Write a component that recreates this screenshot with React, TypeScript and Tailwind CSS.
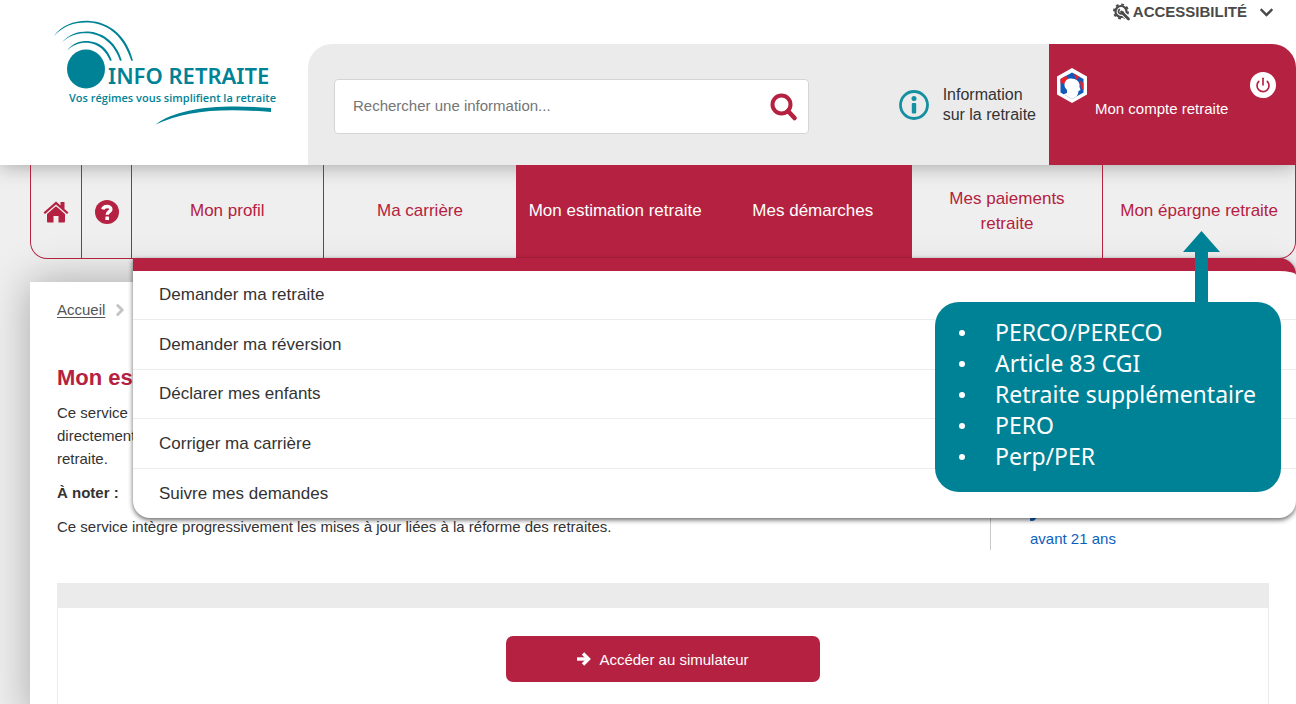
import * as React from 'react';
import { ChevronRight, Power } from 'lucide-react';
import { FaChevronDown, FaPen } from 'react-icons/fa';

// --- DATA ---
interface NavItem {
  label: string;
  active?: boolean;
}

const navItems: NavItem[] = [
  { label: 'Mon profil' },
  { label: 'Ma carrière' },
  { label: 'Mon estimation retraite', active: true },
  { label: 'Mes démarches', active: true },
  { label: 'Mes paiements retraite' },
  { label: 'Mon épargne retraite' },
];

const menuItems = [
  'Demander ma retraite',
  'Demander ma réversion',
  'Déclarer mes enfants',
  'Corriger ma carrière',
  'Suivre mes demandes',
];

const savingsPlans = ['PERCO/PERECO', 'Article 83 CGI', 'Retraite supplémentaire', 'PERO', 'Perp/PER'];

// --- ICONS ---
const Logo = () => (
  <svg width="260" height="130" viewBox="0 0 260 130" fill="#008296" role="img" aria-label="Info Retraite">
    <ellipse cx="46" cy="59" rx="19" ry="19.5" />
    <path d="M13.5 26.500C22 15 34 10.500 48 10.800C71 12 87 27 93 50.500L91.300 50.800C84 28 70 13.500 48 12.500C34 12 23 16 13.500 26.500Z" />
    <path d="M21.500 33C29 24 38 21.300 48 21.500C65 22.500 77 34 81.800 50.500L80 50.800C75 36 64 24.500 48 23.300C38 22.800 29 25 21.500 33Z" />
    <path d="M27 40.500C33 33 40 30.800 48 31C60 32 68 39 71.800 50.500L70 50.800C66 41 59 34 48 32.700C40 32.200 33 34.500 27 40.500Z" />
    <path d="M115.500 114.500C138 98 178 94 231 98L231 102C180 97.500 144 101 115.500 114.500Z" />
    <text x="68" y="74" fontSize="22" fontWeight="600" fontFamily="'Noto Sans', sans-serif">
      INFO RETRAITE
    </text>
    <text x="29" y="92" fontSize="11" fontWeight="600" fontFamily="'Open Sans', sans-serif">
      Vos régimes vous simplifient la retraite
    </text>
  </svg>
);

const SearchIcon = () => (
  <svg width="27" height="28" viewBox="0 0 27 28" fill="none" stroke="#b52140">
    <circle cx="11.500" cy="11.500" r="9" strokeWidth="4" />
    <path d="M18 18L24.500 25" strokeWidth="4.500" strokeLinecap="round" />
  </svg>
);

const InfoIcon = () => (
  <svg width="30" height="32" viewBox="0 0 30 32" fill="#1490a0">
    <circle cx="15" cy="16" r="13.500" fill="none" stroke="#1490a0" strokeWidth="2.800" />
    <circle cx="15" cy="9.500" r="2.500" />
    <rect x="12.800" y="14" width="4.400" height="10.500" rx="1" />
  </svg>
);

const ToolsIcon = () => (
  <svg width="18" height="18" viewBox="0 0 18 18" fill="none" stroke="#4a4a4a">
    <circle cx="8" cy="8.500" r="5.500" strokeWidth="2.200" />
    <circle cx="8" cy="8.500" r="7.100" strokeWidth="1.800" strokeDasharray="2.800 2.780" />
    <path d="M9 9.500L17 17" stroke="#fff" strokeWidth="5" />
    <path d="M8.500 9L15.500 16" strokeWidth="2.800" strokeLinecap="round" />
    <path d="M7 6.200A2.400 2.400 0 1 0 10.300 8.500" strokeWidth="1.700" />
  </svg>
);

const FranceConnectIcon = () => (
  <svg width="30" height="35" viewBox="0 0 30 35">
    <path d="M15 0L30 8.500V26.500L15 35L0 26.500V8.500Z" fill="#fff" />
    <path d="M15 4.500L26.500 11V24.500L15 31L3.500 24.500V11Z" fill="#1259b8" />
    <path d="M3.500 11L9 7.800L12 12L7 16L3.500 15ZM17 5.500L22.500 8.800L19 12ZM23 13L26.500 15V22L24 20Z" fill="#e8202e" />
    <path d="M7.500 16C8 11 13 9.500 17.500 11C22 12.500 23 16 22.500 19L23.500 22L21.500 23L21 26L19.500 28.500L15 31L6.500 26.200L10 25L10 22C8 20 7.300 18.500 7.500 16Z" fill="#fff" />
  </svg>
);

const HomeIcon = () => (
  <svg width="26" height="22" viewBox="0 0 26 22" fill="#b52140">
    <path d="M13 0.500L17.500 4.500V1H21.500V8L25.500 11.500L24 13L13 3.500L2 13L0.500 11.500Z" />
    <path d="M13 5.300L22 13V20.500Q22 21.500 21 21.500H15.500V15H10.500V21.500H5Q4 21.500 4 20.500V13Z" />
  </svg>
);

const HelpIcon = () => (
  <svg width="24" height="24" viewBox="0 0 24 24" fill="none">
    <circle cx="12" cy="12" r="12" fill="#b52140" />
    <path d="M7.800 9.300C8.500 5.800 15.800 5.300 15.900 9.300C15.900 11.800 12.200 11.600 12.200 14.800" stroke="#fff" strokeWidth="3.400" />
    <rect x="10.400" y="16.400" width="3.600" height="3.600" rx="0.500" fill="#fff" />
  </svg>
);

const ArrowIcon = () => (
  <svg width="14" height="14" viewBox="0 0 14 14" fill="none" stroke="#fff" strokeWidth="3.400">
    <path d="M0 7H11" />
    <path d="M6 1.500L11.500 7L6 12.500" />
  </svg>
);

// --- SECTIONS ---
const Header = () => (
  <header className="relative flex bg-white shadow-[0_0_20px_rgba(0,0,0,0.35)]">
    <a href="#accueil" className="w-[308px] shrink-0 pl-10 pt-[10px]">
      <Logo />
    </a>
    <div className="flex min-w-0 flex-1 flex-col">
      <div className="flex h-11 justify-end pr-[22px]">
        <button type="button" className="flex h-6 items-center text-[15px] font-bold text-[#4a4a4a]">
          <ToolsIcon />
          <span className="ml-0.5">ACCESSIBILITÉ</span>
          <FaChevronDown size={15} className="ml-3" />
        </button>
      </div>
      <div className="flex h-[121px] overflow-hidden rounded-t-[24px] bg-[#ebebeb]">
        <form className="ml-[26px] mt-[35px] flex h-[55px] min-w-0 max-w-[475px] flex-1 items-center rounded border border-[#d5d5d5] bg-white pl-[18px] pr-[11px]">
          <input
            type="search"
            aria-label="Rechercher une information"
            placeholder="Rechercher une information..."
            className="min-w-0 flex-1 text-[15px] outline-none placeholder:text-[#757575]"
          />
          <button type="submit" aria-label="Rechercher">
            <SearchIcon />
          </button>
        </form>
        <a href="#information" className="ml-auto flex items-center gap-[14px] pr-[13px] text-[16px] leading-5 text-[#333]">
          <InfoIcon />
          <span>
            Information
            <br />
            sur la retraite
          </span>
        </a>
        <div className="flex w-[247px] shrink-0 items-start bg-[#b52140] pl-2 pr-5 pt-6 text-white">
          <FranceConnectIcon />
          <a href="#compte" className="ml-2 mt-[29px] text-[15px] leading-6">
            Mon compte retraite
          </a>
          <button
            type="button"
            aria-label="Se déconnecter"
            className="ml-auto mt-1 flex size-[26px] items-center justify-center rounded-full bg-white text-[#b52140]"
          >
            <Power size={16} strokeWidth={2.5} />
          </button>
        </div>
      </div>
    </div>
  </header>
);

const MainNav = () => (
  <nav className="relative ml-[30px] grid h-[94px] grid-cols-[51px_50px_192fr_193fr_198fr_198fr_192fr_192fr] overflow-hidden rounded-b-[17px] border-x border-b border-[#b52140] text-[17px] leading-[25px] text-[#b52140]">
    <a href="#accueil" aria-label="Accueil" className="flex items-center justify-center border-r border-[#b52140]">
      <HomeIcon />
    </a>
    <a href="#aide" aria-label="Aide" className="flex items-center justify-center border-r border-[#b52140]">
      <HelpIcon />
    </a>
    {navItems.map(({ label, active }, i) => (
      <a
        key={label}
        href="#menu"
        className={
          active
            ? 'flex items-center justify-center bg-[#b52140] pb-0.5 text-center text-white'
            : `flex items-center justify-center px-3 pb-0.5 text-center ${i === 0 || i === 4 ? 'border-r border-[#b52140]' : ''}`
        }
      >
        {label}
      </a>
    ))}
  </nav>
);

const DropdownMenu = () => (
  <ul className="absolute left-[133px] right-0 top-[258px] grid h-[260px] grid-rows-5 divide-y divide-[#ececec] rounded-b-[17px] rounded-tr-[17px] border-t-[13px] border-[#b52140] bg-white text-[17px] text-[#333] shadow-[0_2px_5px_rgba(0,0,0,0.6)]">
    {menuItems.map((item) => (
      <li key={item} className="flex items-center border-[#ececec] px-[26px]">
        <a href="#demarche">{item}</a>
      </li>
    ))}
  </ul>
);

const SavingsCallout = () => (
  <aside className="absolute right-[15px] top-[231px] flex flex-col items-end">
    <svg width="37" height="71" viewBox="0 0 37 71" fill="#008296" className="mr-[61px]">
      <path d="M18.500 0L37 21H25V71H12V21H0Z" />
    </svg>
    <ul className="h-[190px] w-[346px] rounded-[24px] bg-[#008296] pl-6 pt-[15px] font-['Noto_Sans',sans-serif] text-[23px] leading-[31px] text-white">
      {savingsPlans.map((plan) => (
        <li key={plan} className="flex items-center">
          <span className="mr-[30px] size-1.5 rounded-full bg-white" />
          {plan}
        </li>
      ))}
    </ul>
  </aside>
);

const Content = () => (
  <main className="ml-[30px] mt-[23px] min-h-[422px] bg-white px-[27px] pt-4 text-[15px] leading-[23px] text-[#333] shadow-[0_0_40px_rgba(0,0,0,0.3)]">
    <div className="flex items-center gap-[6px] text-[#555]">
      <a href="#accueil" className="underline underline-offset-2">
        Accueil
      </a>
      <ChevronRight size={18} strokeWidth={4} className="text-[#c4c4c4]" />
    </div>
    <div className="mt-5 flex">
      <section className="flex-1 pb-3">
        <h1 className="mt-[23px] text-[22px] font-bold leading-7 text-[#b52140]">Mon estimation</h1>
        <p className="mt-[9px]">
          Ce service
          <br />
          directement
          <br />
          retraite.
        </p>
        <p className="mt-[11px] font-bold">À noter :</p>
        <p className="mt-[11px]">
          Ce service intègre progressivement les mises à jour liées à la réforme des retraites.
        </p>
      </section>
      <aside className="flex w-[279px] flex-col justify-end border-l border-[#c8c8c8] pl-[39px] text-[#0b5fc0]">
        <FaPen size={14} />
        <a href="#jeunes" className="mt-1.5">
          avant 21 ans
        </a>
      </aside>
    </div>
    <section className="mt-[33px] border border-[#ebebeb]">
      <div className="h-6 bg-[#ebebeb]" />
      <div className="flex h-[110px] justify-center pt-7">
        <button
          type="button"
          className="flex h-[46px] w-[314px] items-center justify-center gap-2 rounded-[7px] bg-[#b52140] text-white"
        >
          <ArrowIcon />
          Accéder au simulateur
        </button>
      </div>
    </section>
  </main>
);

export default function App() {
  return (
    <div className="relative h-screen overflow-hidden bg-[#efefef] font-['Liberation_Sans',Arial,sans-serif]">
      <Header />
      <MainNav />
      <Content />
      <DropdownMenu />
      <SavingsCallout />
    </div>
  );
}
